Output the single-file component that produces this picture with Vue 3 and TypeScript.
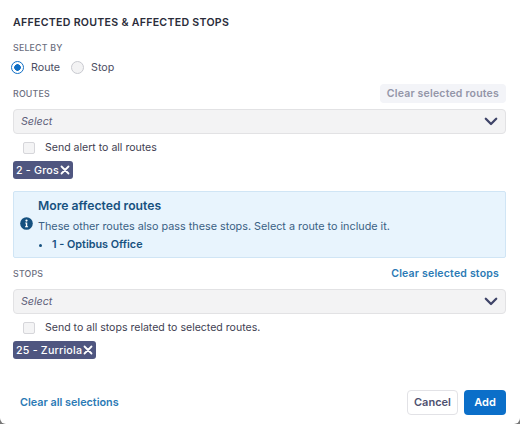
<script setup lang="ts">
const title = 'AFFECTED ROUTES & AFFECTED STOPS'
</script>

<template>
  <div class="modal">
    <h1 class="title">{{ title }}</h1>
    <div class="label select-by">SELECT BY</div>
    <div class="radios">
      <span class="radio on"></span><span class="radio-text">Route</span>
      <span class="radio off"></span><span class="radio-text">Stop</span>
    </div>

    <div class="row routes-row">
      <span class="label">ROUTES</span>
      <span class="clear disabled">Clear selected routes</span>
    </div>
    <div class="select">
      <span>Select</span>
      <svg width="14" height="9" viewBox="0 0 14 9"><path d="M1.8 1.8 7 7l5.2-5.2" fill="none" stroke="#3f4468" stroke-width="2.3" stroke-linecap="round" stroke-linejoin="round"/></svg>
    </div>
    <label class="check"><span class="box"></span>Send alert to all routes</label>
    <div class="tags">
      <span class="tag">2 - Gros<svg width="10" height="10" viewBox="0 0 10 10"><path d="M1.5 1.5l7 7M8.5 1.5l-7 7" stroke="#fff" stroke-width="1.8" stroke-linecap="round"/></svg></span>
    </div>

    <div class="alert">
      <svg class="info" width="13" height="13" viewBox="0 0 14 14"><circle cx="7" cy="7" r="6.8" fill="#15507f"/><circle cx="7" cy="3.9" r="1.2" fill="#fff"/><path d="M5.6 6h2.2v4h.9v1.1H5.4V10h.9V7.1h-.7z" fill="#fff"/></svg>
      <div class="alert-body">
        <div class="alert-title">More affected routes</div>
        <div class="alert-text">These other routes also pass these stops. Select a route to include it.</div>
        <ul><li>1 - Optibus Office</li></ul>
      </div>
    </div>

    <div class="row stops-row">
      <span class="label">STOPS</span>
      <span class="clear active">Clear selected stops</span>
    </div>
    <div class="select">
      <span>Select</span>
      <svg width="14" height="9" viewBox="0 0 14 9"><path d="M1.8 1.8 7 7l5.2-5.2" fill="none" stroke="#3f4468" stroke-width="2.3" stroke-linecap="round" stroke-linejoin="round"/></svg>
    </div>
    <label class="check"><span class="box"></span>Send to all stops related to selected routes.</label>
    <div class="tags">
      <span class="tag">25 - Zurriola<svg width="10" height="10" viewBox="0 0 10 10"><path d="M1.5 1.5l7 7M8.5 1.5l-7 7" stroke="#fff" stroke-width="1.8" stroke-linecap="round"/></svg></span>
    </div>

    <div class="footer">
      <span class="clear-all">Clear all selections</span>
      <div class="actions">
        <button class="btn cancel">Cancel</button>
        <button class="btn add">Add</button>
      </div>
    </div>
  </div>
</template>

<style>
html, body { margin: 0; background: #777; }
</style>

<style scoped>
.modal {
  box-sizing: border-box;
  width: 520px;
  height: 424px;
  padding: 15px 14px 10px 13px;
  background: #fff;
  border-radius: 0 0 6px 6px;
  font-family: Inter, "Liberation Sans", sans-serif;
  color: #3a3d52;
  display: flex;
  flex-direction: column;
  overflow: hidden;
}
.title { margin: 0; font-size: 10.6px; line-height: 15px; font-weight: 600; letter-spacing: 0.28px; color: #2a2c3a; }
.label { font-size: 8.8px; line-height: 12px; font-weight: 500; letter-spacing: 0.2px; color: #6c6f80; }
.select-by { margin-top: 12px; }
.radios { display: flex; align-items: center; margin: 6px 0 0 -2px; height: 14px; font-size: 10.7px; color: #4b4e63; }
.radio { box-sizing: border-box; width: 13px; height: 13px; border-radius: 50%; flex: none; }
.radio.on { border: 1.5px solid #0f6fc6; background: radial-gradient(circle, #0f6fc6 0 3px, #fff 3.6px); }
.radio.off { border: 1px solid #c9cad0; background: #f3f3f4; }
.radio-text { margin: 0 11px 0 7px; }
.row { display: flex; justify-content: space-between; align-items: center; height: 19px; }
.routes-row { margin-top: 10px; }
.stops-row { margin-top: 6px; }
.clear { font-size: 10.5px; font-weight: 600; letter-spacing: 0.2px; padding: 0 7px; line-height: 19px; border-radius: 4px; }
.disabled { background: #f3f4f8; color: #9496a8; }
.active { color: #2b7ab5; }
.select {
  box-sizing: border-box;
  height: 25px;
  margin-top: 6px;
  padding: 0 7px;
  border: 1px solid #e2e2e4;
  border-radius: 4px;
  background: #f3f3f4;
  display: flex;
  align-items: center;
  justify-content: space-between;
  font-size: 10.7px;
  font-style: italic;
  color: #5d607a;
}
.check { display: flex; align-items: center; height: 13px; margin-top: 7px; padding-left: 10px; font-size: 10.55px; color: #3f4152; }
.box { box-sizing: border-box; width: 12px; height: 12px; margin-right: 10px; border: 1px solid #d6d6da; border-radius: 2px; background: #f4f4f5; }
.tags { display: flex; margin-top: 7px; }
.tag {
  display: inline-flex;
  align-items: center;
  gap: 1px;
  height: 18px;
  padding: 0 3px;
  border-radius: 3px;
  background: #4f5680;
  color: #fff;
  font-size: 10.7px;
  font-weight: 500;
  letter-spacing: 0.2px;
}
.alert {
  box-sizing: border-box;
  height: 67px;
  margin-top: 12px;
  padding: 6px 8px 0 6px;
  display: flex;
  align-items: center;
  gap: 5px;
  background: #e8f4fd;
  border: 1px solid #d0e5f5;
  border-radius: 2px;
}
.info { flex: none; margin-top: -8px; }
.alert-body { flex: 1; align-self: flex-start; }
.alert-title { font-size: 12.2px; line-height: 16px; font-weight: 600; color: #17517f; }
.alert-text { margin-top: 6px; font-size: 10.8px; line-height: 14px; color: #3a6184; }
ul { margin: 4px 0 0; padding-left: 14px; font-size: 10.8px; line-height: 14px; font-weight: 600; color: #17517f; }
.footer { margin-top: auto; display: flex; justify-content: space-between; align-items: center; height: 24px; }
.clear-all { padding-left: 7px; font-size: 10.8px; font-weight: 600; color: #2b7ab5; }
.actions { display: flex; gap: 6px; }
.btn { box-sizing: border-box; height: 25px; border-radius: 4px; font-family: inherit; font-size: 11px; font-weight: 600; padding: 0; }
.cancel { width: 51px; background: #fff; border: 1px solid #e2e2e6; color: #4e5170; }
.add { width: 42px; background: #0b6fc9; border: 0; color: #fff; }
</style>
